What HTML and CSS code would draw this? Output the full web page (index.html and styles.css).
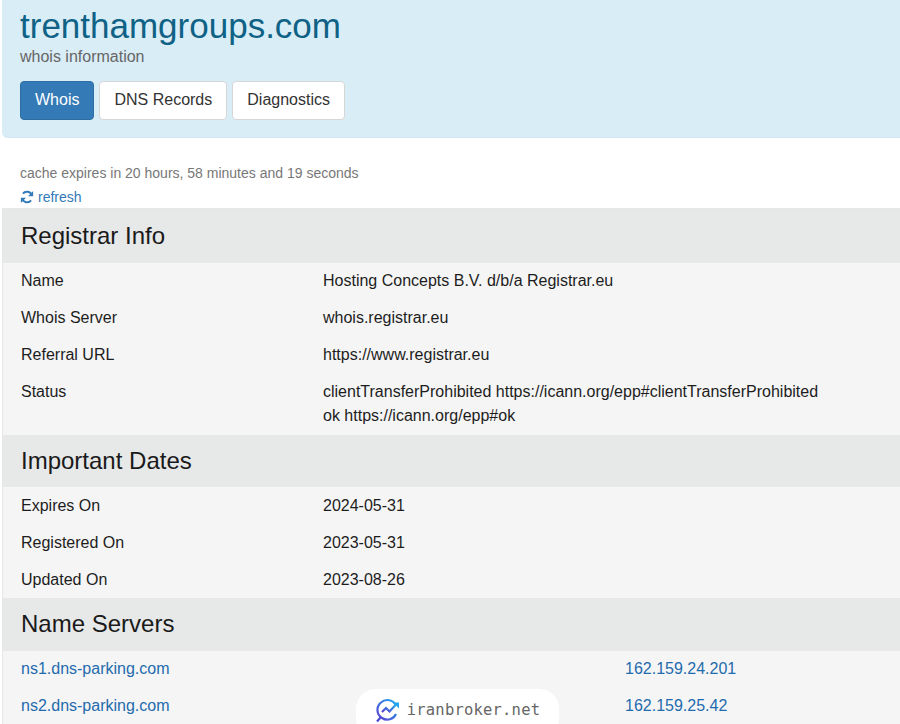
FILE: index.html
```html
<!DOCTYPE html>
<html lang="en">
<head>
<meta charset="utf-8">
<title>trenthamgroups.com whois</title>
<link rel="stylesheet" href="styles.css">
</head>
<body>
<header class="hero">
  <h1 class="title">trenthamgroups.com</h1>
  <p class="subtitle">whois information</p>
  <nav class="tabs">
    <a class="tab tab-active">Whois</a>
    <a class="tab">DNS Records</a>
    <a class="tab">Diagnostics</a>
  </nav>
</header>
<section class="cache">
  <p class="cache-text">cache expires in 20 hours, 58 minutes and 19 seconds</p>
  <a class="refresh">
    <svg class="refresh-icon" viewBox="0 0 16 16" width="14" height="14" aria-hidden="true">
      <path d="M13.6 6.2A5.9 5.9 0 0 0 3.3 4.2" fill="none" stroke="#337ab7" stroke-width="2.2"/>
      <path d="M15 1.2v5.9H9.2z" fill="#337ab7"/>
      <path d="M2.4 9.8a5.9 5.9 0 0 0 10.3 2" fill="none" stroke="#337ab7" stroke-width="2.2"/>
      <path d="M1 14.8V8.9h5.8z" fill="#337ab7"/>
    </svg>
    refresh
  </a>
</section>
<main class="panel">
  <h2 class="section">Registrar Info</h2>
  <div class="row"><div>Name</div><div>Hosting Concepts B.V. d/b/a Registrar.eu</div></div>
  <div class="row"><div>Whois Server</div><div>whois.registrar.eu</div></div>
  <div class="row"><div>Referral URL</div><div>https://www.registrar.eu</div></div>
  <div class="row"><div>Status</div><div>clientTransferProhibited https://icann.org/epp#clientTransferProhibited<br>ok https://icann.org/epp#ok</div></div>
  <h2 class="section">Important Dates</h2>
  <div class="row"><div>Expires On</div><div>2024-05-31</div></div>
  <div class="row"><div>Registered On</div><div>2023-05-31</div></div>
  <div class="row"><div>Updated On</div><div>2023-08-26</div></div>
  <h2 class="section">Name Servers</h2>
  <div class="row row-ns"><a class="link">ns1.dns-parking.com</a><a class="link">162.159.24.201</a></div>
  <div class="row row-ns"><a class="link">ns2.dns-parking.com</a><a class="link">162.159.25.42</a></div>
</main>
<aside class="badge">
  <svg class="badge-icon" viewBox="0 0 26 26" width="26" height="26" aria-hidden="true">
    <defs>
      <linearGradient id="bg" x1="0" y1="1" x2="1" y2="0">
        <stop offset="0" stop-color="#5a3fd0"/>
        <stop offset="1" stop-color="#22a6ee"/>
      </linearGradient>
    </defs>
    <path d="M21 8.5A9.5 9.5 0 0 0 6 5.5a9.5 9.5 0 0 0 1 15.5a9.5 9.5 0 0 0 14-4" fill="none" stroke="url(#bg)" stroke-width="2.2"/>
    <path d="M5.5 20.5L2 24.5" stroke="#4a4ad6" stroke-width="2.2" fill="none"/>
    <path d="M7 15l4-4 3.5 3.5 6-6.5" fill="none" stroke="url(#bg)" stroke-width="2.2"/>
    <path d="M18 5.5h6v6z" fill="#22a6ee"/>
  </svg>
  <span class="badge-text">iranbroker.net</span>
</aside>
</body>
</html>
```
FILE: styles.css
```css
html, body {
  margin: 0;
  padding: 0;
  height: 724px;
  overflow: hidden;
  background: #fff;
  font-family: "Liberation Sans", Arial, sans-serif;
  color: #1d1d1d;
  font-size: 16px;
  line-height: 24px;
}
body { position: relative; }
.hero {
  margin-left: 2px;
  height: 137px;
  padding-left: 18px;
  background: #d9edf7;
  border-bottom: 1px solid #cfe7f3;
  border-bottom-left-radius: 6px;
  box-sizing: content-box;
  overflow: hidden;
}
.title {
  margin: 0;
  padding-top: 5px;
  font-size: 35px;
  line-height: 42px;
  font-weight: 400;
  color: #0f6285;
}
.subtitle {
  margin: 0;
  font-size: 16px;
  line-height: 20px;
  color: #666;
}
.tabs {
  display: flex;
  gap: 5px;
  margin-top: 14px;
}
.tab {
  display: block;
  height: 39px;
  box-sizing: border-box;
  padding: 0 14px;
  border: 1px solid #d6d6d6;
  border-radius: 4px;
  background: #fff;
  color: #333;
  font-size: 16px;
  line-height: 36px;
}
.tab-active {
  background: #337ab7;
  border-color: #2e6da4;
  color: #fff;
}
.cache {
  height: 70px;
  padding-left: 20px;
  box-sizing: border-box;
  padding-top: 24px;
  font-size: 14px;
}
.cache-text {
  margin: 0;
  color: #777;
  line-height: 22px;
}
.refresh {
  display: flex;
  align-items: center;
  gap: 4px;
  margin-top: 1px;
  color: #337ab7;
  line-height: 24px;
}
.panel {
  margin-left: 2px;
  border-top: 2px solid #e7e7e7;
  border-left: 1px solid #e7e7e7;
  background: #f5f5f5;
}
.section {
  margin: 0;
  height: 52.5px;
  padding-left: 18px;
  background: #e7e8e8;
  font-size: 24px;
  font-weight: 400;
  line-height: 52px;
  color: #1a1a1a;
}
.row {
  display: grid;
  grid-template-columns: 302px 1fr;
  padding: 6.5px 0 6.5px 18px;
}
.row-ns {
  grid-template-columns: 604px 1fr;
}
.link { color: #1f6bad; }
.badge {
  position: absolute;
  left: 356px;
  top: 689px;
  width: 203px;
  height: 50px;
  background: #fff;
  border-radius: 20px;
  display: flex;
  align-items: flex-start;
  justify-content: center;
  gap: 6px;
  padding-top: 8px;
  box-sizing: border-box;
}
.badge-icon { flex: none; }
.badge-text {
  font-family: "DejaVu Sans Mono", monospace;
  font-size: 15.5px;
  line-height: 26px;
  color: #666;
  letter-spacing: 0.2px;
}
```
